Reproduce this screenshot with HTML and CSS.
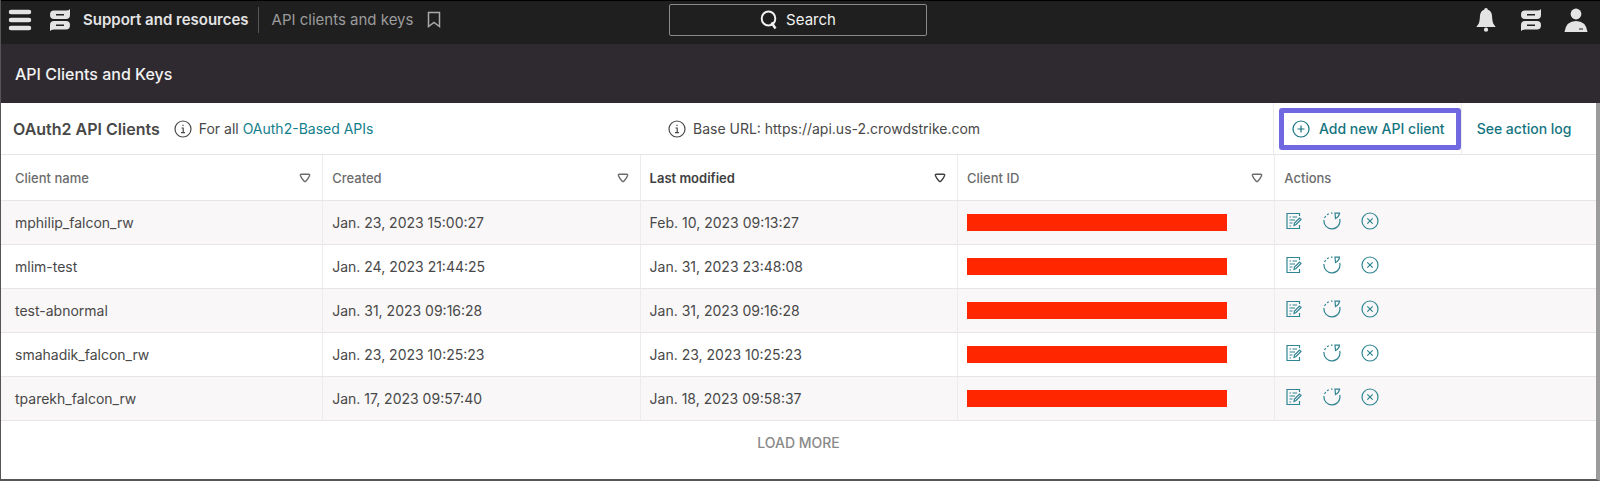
FILE: index.html
```
<!DOCTYPE html>
<html lang="en">
<head>
<meta charset="utf-8">
<meta name="viewport" content="width=device-width, initial-scale=1">
<title>API Clients and Keys</title>
<link rel="stylesheet" href="styles.css">
</head>
<body>
<svg class="sprite" aria-hidden="true">
  <symbol id="brand" viewBox="0 0 22 22"><path fill="currentColor" fill-rule="evenodd" d="M5 1.500H17Q20 1.500 21 0V6Q21 10 17 10H5Q1 10 1 5.700Q1 1.500 5 1.500ZM7 5.100V6.600H15V5.100ZM5 12H17Q21 12 21 16Q21 20.500 17 20.500H5Q2 20.500 1 22V16Q1 12 5 12ZM7 15.500V17H15V15.500Z"/></symbol>
  <symbol id="info" viewBox="0 0 18 18"><circle cx="9" cy="9" r="8"/><path d="M7.500 8H9.200V12.500M7 12.700H11M9 4.800V6"/></symbol>
  <symbol id="sort" viewBox="0 0 12 10"><path d="M2.500 1.200H9.500Q11.200 1.200 10.400 3Q9.300 5.800 6.800 8.200Q6 8.900 5.200 8.200Q2.700 5.800 1.600 3Q.8 1.200 2.500 1.200Z"/></symbol>
  <symbol id="edit" viewBox="0 0 18 18"><path d="M14.500 4V1.500H2V16.500H14.500V13M4.500 5H6M7.500 5H12M4.500 8H10M4.500 11H7.500M4.500 14H6M9 13.500L9.500 11L14.500 6L16 7.500L11 12.500Z"/></symbol>
  <symbol id="reset" viewBox="0 0 18 18"><path d="M16.700 7A8 8 0 1 1 1 8M1.500 6L2.700 4M4 2.700L5.800 1.700M8 1.100H9.500M12 1.200H16.500Q16 5 12.500 6.500Z"/></symbol>
  <symbol id="remove" viewBox="0 0 18 18"><circle cx="9" cy="9" r="8"/><path d="M6.300 6.300L11.700 11.700M11.700 6.300L6.300 11.700"/></symbol>
</svg>
<div class="app">
  <header class="topbar">
    <div class="topbar-left">
      <button class="icon-button" aria-label="Menu"><svg class="icon-large" viewBox="0 0 24 24" aria-hidden="true"><path d="M3 4H21M3 12H21M3 20H21" stroke="currentColor" stroke-width="4.500" stroke-linecap="round"/></svg></button>
      <a class="brand" href="#"><svg class="icon-brand" aria-hidden="true"><use href="#brand"/></svg>Support and resources</a>
      <span class="crumb">API clients and keys</span>
      <button class="icon-button bookmark" aria-label="Bookmark"><svg class="icon-bookmark" viewBox="0 0 16 18" aria-hidden="true"><path d="M2.500 1.500H13.500V15.500L8 11.500L2.500 15.500Z" fill="none" stroke="currentColor" stroke-width="1.500"/></svg></button>
    </div>
    <button class="search"><svg class="icon-search" viewBox="0 0 18 20" aria-hidden="true"><ellipse cx="8.500" cy="8.500" rx="6.800" ry="7" fill="none" stroke="currentColor" stroke-width="2"/><path d="M11.500 12.500L15.500 18.500" stroke="currentColor" stroke-width="2.400"/></svg>Search</button>
    <div class="topbar-right">
      <button class="icon-button" aria-label="Notifications"><svg class="icon-large" viewBox="0 0 24 26" aria-hidden="true"><path fill="currentColor" d="M12 0Q14 0 14 2Q18 3.500 18.500 8Q18.800 14.500 20 17L22.500 20.500H1.500L4 17Q5.200 14.500 5.500 8Q6 3.500 10 2Q10 0 12 0Z"/><circle cx="12" cy="23.500" r="2.300" fill="currentColor"/></svg></button>
      <button class="icon-button" aria-label="Falcon support"><svg class="icon-brand" aria-hidden="true"><use href="#brand"/></svg></button>
      <button class="icon-button" aria-label="Account"><svg class="icon-large" viewBox="0 0 24 24" aria-hidden="true"><circle cx="12" cy="6" r="5.400" fill="currentColor"/><path fill="currentColor" d="M.5 24Q2 13 12 13Q22 13 23.500 24Z"/><path d="M15 21H19" stroke="#1f1f1f"/></svg></button>
    </div>
  </header>
  <h1 class="page-title">API Clients and Keys</h1>
  <main>
    <div class="toolbar">
      <div class="toolbar-intro">
        <h2>OAuth2 API Clients</h2>
        <p class="note"><svg class="icon line" aria-hidden="true"><use href="#info"/></svg><span>For all <a href="#">OAuth2-Based APIs</a></span></p>
      </div>
      <p class="note"><svg class="icon line" aria-hidden="true"><use href="#info"/></svg>Base URL: https://api.us-2.crowdstrike.com</p>
      <div class="toolbar-actions">
        <div class="add-cell"><button class="add"><svg class="icon line" viewBox="0 0 18 18" aria-hidden="true"><circle cx="9" cy="9" r="8"/><path d="M9 5.500V12.500M5.500 9H12.500"/></svg>Add new API client</button></div>
        <a class="log" href="#">See action log</a>
      </div>
    </div>
    <table class="clients">
      <colgroup><col class="col-name"><col class="col-data"><col class="col-data"><col class="col-data"><col></colgroup>
      <thead>
        <tr>
          <th scope="col"><button class="sort">Client name<svg class="icon-sort line" aria-hidden="true"><use href="#sort"/></svg></button></th>
          <th scope="col"><button class="sort">Created<svg class="icon-sort line" aria-hidden="true"><use href="#sort"/></svg></button></th>
          <th scope="col"><button class="sort active">Last modified<svg class="icon-sort line" aria-hidden="true"><use href="#sort"/></svg></button></th>
          <th scope="col"><button class="sort">Client ID<svg class="icon-sort line" aria-hidden="true"><use href="#sort"/></svg></button></th>
          <th scope="col">Actions</th>
        </tr>
      </thead>
      <tbody>
        <tr><td>mphilip_falcon_rw</td><td>Jan. 23, 2023 15:00:27</td><td>Feb. 10, 2023 09:13:27</td><td><div class="redacted"></div></td><td><div class="row-actions"><button class="icon-button" aria-label="Edit"><svg class="icon line" aria-hidden="true"><use href="#edit"/></svg></button><button class="icon-button" aria-label="Reset"><svg class="icon line" aria-hidden="true"><use href="#reset"/></svg></button><button class="icon-button" aria-label="Delete"><svg class="icon line" aria-hidden="true"><use href="#remove"/></svg></button></div></td></tr>
        <tr><td>mlim-test</td><td>Jan. 24, 2023 21:44:25</td><td>Jan. 31, 2023 23:48:08</td><td><div class="redacted"></div></td><td><div class="row-actions"><button class="icon-button" aria-label="Edit"><svg class="icon line" aria-hidden="true"><use href="#edit"/></svg></button><button class="icon-button" aria-label="Reset"><svg class="icon line" aria-hidden="true"><use href="#reset"/></svg></button><button class="icon-button" aria-label="Delete"><svg class="icon line" aria-hidden="true"><use href="#remove"/></svg></button></div></td></tr>
        <tr><td>test-abnormal</td><td>Jan. 31, 2023 09:16:28</td><td>Jan. 31, 2023 09:16:28</td><td><div class="redacted"></div></td><td><div class="row-actions"><button class="icon-button" aria-label="Edit"><svg class="icon line" aria-hidden="true"><use href="#edit"/></svg></button><button class="icon-button" aria-label="Reset"><svg class="icon line" aria-hidden="true"><use href="#reset"/></svg></button><button class="icon-button" aria-label="Delete"><svg class="icon line" aria-hidden="true"><use href="#remove"/></svg></button></div></td></tr>
        <tr><td>smahadik_falcon_rw</td><td>Jan. 23, 2023 10:25:23</td><td>Jan. 23, 2023 10:25:23</td><td><div class="redacted"></div></td><td><div class="row-actions"><button class="icon-button" aria-label="Edit"><svg class="icon line" aria-hidden="true"><use href="#edit"/></svg></button><button class="icon-button" aria-label="Reset"><svg class="icon line" aria-hidden="true"><use href="#reset"/></svg></button><button class="icon-button" aria-label="Delete"><svg class="icon line" aria-hidden="true"><use href="#remove"/></svg></button></div></td></tr>
        <tr><td>tparekh_falcon_rw</td><td>Jan. 17, 2023 09:57:40</td><td>Jan. 18, 2023 09:58:37</td><td><div class="redacted"></div></td><td><div class="row-actions"><button class="icon-button" aria-label="Edit"><svg class="icon line" aria-hidden="true"><use href="#edit"/></svg></button><button class="icon-button" aria-label="Reset"><svg class="icon line" aria-hidden="true"><use href="#reset"/></svg></button><button class="icon-button" aria-label="Delete"><svg class="icon line" aria-hidden="true"><use href="#remove"/></svg></button></div></td></tr>
      </tbody>
    </table>
    <button class="load-more">LOAD MORE</button>
  </main>
</div>
</body>
</html>
```
FILE: styles.css
```
* { box-sizing: border-box; }
body { margin: 0; background: #fff; color: #484848; font: 14px/20px Inter, "Liberation Sans", sans-serif; }
h1, h2, p { margin: 0; }
button { padding: 0; border: 0; background: none; color: inherit; font: inherit; cursor: pointer; }
a { color: #14808c; text-decoration: none; }
svg { display: block; flex: none; }
.sprite { display: none; }
.app { min-height: 100vh; border-left: 1px solid #555; border-right: 4px solid #9c9c9c; border-bottom: 2px solid #555; }
.line { fill: none; stroke: currentColor; stroke-width: 1.2; }
.icon { width: 18px; height: 18px; }
.icon-large { width: 24px; height: 24px; }
.icon-brand { width: 22px; height: 22px; }
.icon-bookmark { width: 16px; height: 18px; }
.icon-search { width: 18px; height: 20px; }
.icon-sort { width: 12px; height: 10px; stroke-width: 1.4; }

.topbar { display: grid; grid-template-columns: 1fr 258px 1fr; align-items: center; height: 44px; padding: 0 12px 5px 7px; border-top: 1px solid #000; margin-right: -4px; background: #1f1f1f; color: #e4e4e4; }
.topbar-left { display: flex; align-items: center; }
.topbar-right { display: flex; align-items: center; justify-content: flex-end; gap: 22px; }
.brand { display: flex; align-items: center; gap: 12px; margin-left: 17px; color: #e4e4e4; font-size: 15px; font-weight: 600; }
.crumb { margin-left: 9px; padding-left: 13px; border-left: 1px solid #555; color: #9b9b9b; font-size: 15px; line-height: 26px; }
.bookmark { margin-left: 13px; color: #aaa; }
.search { display: flex; align-items: center; justify-content: center; gap: 8px; height: 32px; border: 1px solid #8a8a8a; border-radius: 2px; color: #f2f2f2; font-size: 15px; }

.page-title { display: flex; align-items: center; height: 59px; padding-left: 14px; margin-right: -4px; background: #2f2a30; color: #f2f2f2; font-size: 16px; font-weight: 500; }

.toolbar { display: grid; grid-template-columns: 667fr 605fr 323fr; align-items: center; height: 52px; border-bottom: 1px solid #e6e6e6; }
.toolbar-intro { display: flex; align-items: center; gap: 14px; padding-left: 12px; }
.toolbar h2 { font-size: 16px; line-height: 20px; font-weight: 600; }
.note { display: flex; align-items: center; gap: 7px; }
.toolbar-actions { display: flex; align-items: center; align-self: stretch; border-left: 1px solid #ececec; color: #14747f; font-weight: 500; }
.add-cell { display: flex; align-items: center; align-self: stretch; padding-left: 5px; border-right: 1px solid #ececec; }
.add { display: flex; align-items: center; gap: 9px; height: 42px; padding: 0 11px 0 8px; border: 5px solid #7068e0; border-radius: 3px; }
.log { margin-left: 15px; color: inherit; }

.clients { width: 100%; table-layout: fixed; border-collapse: separate; border-spacing: 0; }
.col-name { width: 20.2%; }
.col-data { width: 19.9%; }
th, td { height: 44px; padding: 0 9px; border-bottom: 1px solid #e6e6e6; border-right: 1px solid #ececec; text-align: left; }
th { height: 46px; color: #6c6c6c; font-size: 13px; font-weight: 500; }
th:first-child, td:first-child { padding-left: 14px; }
th:last-child, td:last-child { border-right: 0; }
tbody tr:nth-child(odd) { background: #f9f7f8; }
.sort { display: flex; align-items: center; justify-content: space-between; width: 100%; padding-right: 2px; }
.sort.active { color: #404040; font-weight: 600; }
.redacted { width: 87%; height: 17px; background: #ff2600; }
.row-actions { display: flex; gap: 20px; padding-left: 1px; padding-bottom: 3px; color: #308592; }
.load-more { display: block; margin: 12px auto; color: #8a8a8a; font-weight: 500; }
```
